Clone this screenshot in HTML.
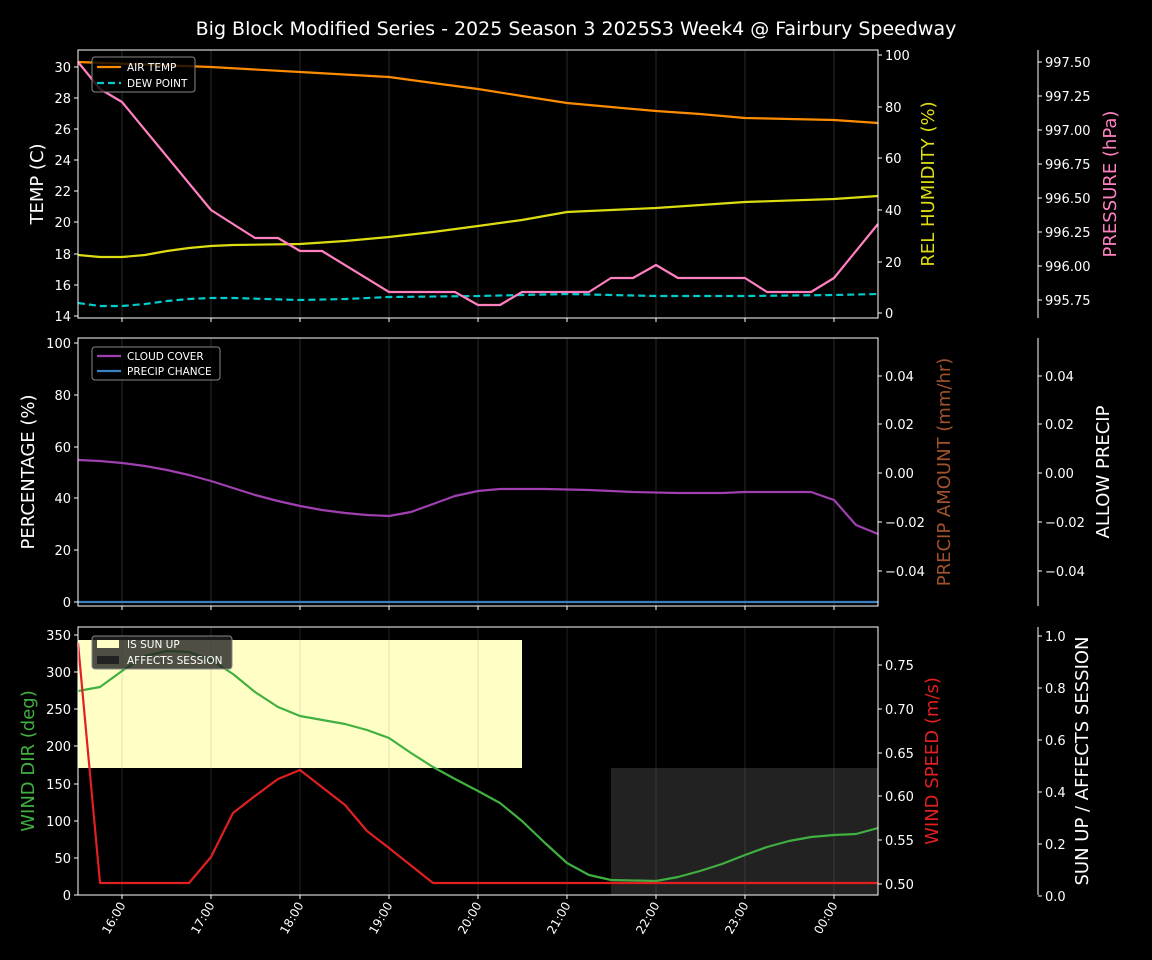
<!DOCTYPE html>
<html><head><meta charset="utf-8"><style>html,body{margin:0;padding:0;background:#000;}svg{display:block;font-family:"DejaVu Sans","Liberation Sans",sans-serif;}</style></head><body>
<svg width="1152" height="960" viewBox="0 0 1152 960" xmlns="http://www.w3.org/2000/svg">
<rect width="1152" height="960" fill="#000"/>
<text x="576" y="35" fill="#fff" font-size="19" text-anchor="middle">Big Block Modified Series - 2025 Season 3 2025S3 Week4 @ Fairbury Speedway</text>
<g stroke="#2a2a2a" stroke-width="1">
<path d="M122 50V318M211 50V318M300 50V318M389 50V318M478 50V318M567 50V318M656 50V318M745 50V318M834 50V318"/>
<path d="M122 338V606M211 338V606M300 338V606M389 338V606M478 338V606M567 338V606M656 338V606M745 338V606M834 338V606"/>
</g>
<rect x="78" y="640" width="444" height="128" fill="#ffffc5"/>
<rect x="611" y="768" width="267" height="127" fill="#222"/>
<g stroke="#888" stroke-width="1" opacity="0.25">
<path d="M122 627V895M211 627V895M300 627V895M389 627V895M478 627V895M567 627V895M656 627V895M745 627V895M834 627V895"/>
</g>
<g fill="none" stroke-width="2.2" stroke-linejoin="round">
<polyline stroke="#ff8c00" points="78,62 211,67 300,72 389,77 433,83 478,89 522,96 567,103 611,107 656,111 700,114 745,118 834,120 878,123"/>
<polyline stroke="#00cccc" stroke-dasharray="7,4" points="78,303 100,306 122,306 145,304 167,301 189,299 211,298 233,298 300,300 345,299 389,297 478,296 567,294 656,296 745,296 834,295 878,294"/>
<polyline stroke="#dddd11" points="78,255 100,257 122,257 145,255 167,251 189,248 211,246 233,245 300,244 345,241 389,237 433,232 478,226 522,220 567,212 611,210 656,208 745,202 834,199 878,196"/>
<polyline stroke="#ff80c0" points="78,62 100,89 122,102 211,210 255,238 278,238 300,251 322,251 389,292 455,292 478,305 500,305 522,292 589,292 611,278 633,278 656,265 678,278 745,278 767,292 811,292 834,278 878,224"/>
<polyline stroke="#a040b0" points="78,460 100,461 122,463 145,466 167,470 189,475 211,481 233,488 255,495 278,501 300,506 322,510 345,513 367,515 389,516 411,512 433,504 455,496 478,491 500,489 545,489 589,490 633,492 678,493 722,493 745,492 789,492 811,492 834,500 856,525 878,534"/>
<line stroke="#3a80c0" x1="78" y1="602" x2="878" y2="602"/>
<polyline stroke="#40b040" points="78,691 100,687 122,671 145,656 167,651 189,652 211,660 233,674 255,692 278,707 300,716 345,724 367,730 389,738 411,753 433,767 455,779 478,791 500,803 522,821 545,843 567,863 589,875 611,880 656,881 678,877 700,871 722,864 745,855 767,847 789,841 811,837 834,835 856,834 878,828"/>
<polyline stroke="#e02020" points="78,643 100,883 189,883 211,857 233,813 255,796 278,779 300,770 345,805 367,831 389,848 433,883 878,883"/>
</g>
<g fill="none" stroke="#fff" stroke-width="1">
<rect x="78" y="50" width="800" height="268"/>
<rect x="78" y="338" width="800" height="268"/>
<rect x="78" y="627" width="800" height="268"/>
<path d="M1038 50V318M1038 338V606M1038 627V895"/>
<path d="M122 318v4M211 318v4M300 318v4M389 318v4M478 318v4M567 318v4M656 318v4M745 318v4M834 318v4"/>
<path d="M122 606v4M211 606v4M300 606v4M389 606v4M478 606v4M567 606v4M656 606v4M745 606v4M834 606v4"/>
<path d="M122 895v4M211 895v4M300 895v4M389 895v4M478 895v4M567 895v4M656 895v4M745 895v4M834 895v4"/>
<path d="M78 67h-4M78 98h-4M78 129h-4M78 160h-4M78 191h-4M78 222h-4M78 254h-4M78 285h-4M78 316h-4"/>
<path d="M878 55h4M878 107h4M878 158h4M878 210h4M878 262h4M878 313h4"/>
<path d="M1038 62h4M1038 96h4M1038 130h4M1038 164h4M1038 198h4M1038 232h4M1038 266h4M1038 300h4"/>
<path d="M78 343h-4M78 395h-4M78 447h-4M78 498h-4M78 550h-4M78 602h-4"/>
<path d="M878 376h4M878 424h4M878 473h4M878 522h4M878 571h4"/>
<path d="M1038 376h4M1038 424h4M1038 473h4M1038 522h4M1038 571h4"/>
<path d="M78 635h-4M78 672h-4M78 709h-4M78 746h-4M78 784h-4M78 821h-4M78 858h-4M78 895h-4"/>
<path d="M878 665h4M878 709h4M878 753h4M878 796h4M878 840h4M878 884h4"/>
<path d="M1038 636h4M1038 688h4M1038 740h4M1038 792h4M1038 844h4M1038 896h4"/>
</g>
<g fill="#fff" font-size="13">
<g text-anchor="end">
<text x="71" y="72">30</text><text x="71" y="103">28</text><text x="71" y="134">26</text><text x="71" y="165">24</text><text x="71" y="196">22</text><text x="71" y="227">20</text><text x="71" y="259">18</text><text x="71" y="290">16</text><text x="71" y="321">14</text>
<text x="71" y="348">100</text><text x="71" y="400">80</text><text x="71" y="452">60</text><text x="71" y="503">40</text><text x="71" y="555">20</text><text x="71" y="607">0</text>
<text x="71" y="640">350</text><text x="71" y="677">300</text><text x="71" y="714">250</text><text x="71" y="751">200</text><text x="71" y="789">150</text><text x="71" y="826">100</text><text x="71" y="863">50</text><text x="71" y="900">0</text>
</g>
<text x="885" y="60">100</text><text x="885" y="112">80</text><text x="885" y="163">60</text><text x="885" y="215">40</text><text x="885" y="267">20</text><text x="885" y="318">0</text>
<text x="1045" y="67">997.50</text><text x="1045" y="101">997.25</text><text x="1045" y="135">997.00</text><text x="1045" y="169">996.75</text><text x="1045" y="203">996.50</text><text x="1045" y="237">996.25</text><text x="1045" y="271">996.00</text><text x="1045" y="305">995.75</text>
<text x="885" y="381">0.04</text><text x="885" y="429">0.02</text><text x="885" y="478">0.00</text><text x="885" y="527">−0.02</text><text x="885" y="576">−0.04</text>
<text x="1045" y="381">0.04</text><text x="1045" y="429">0.02</text><text x="1045" y="478">0.00</text><text x="1045" y="527">−0.02</text><text x="1045" y="576">−0.04</text>
<text x="885" y="670">0.75</text><text x="885" y="714">0.70</text><text x="885" y="758">0.65</text><text x="885" y="801">0.60</text><text x="885" y="845">0.55</text><text x="885" y="889">0.50</text>
<text x="1045" y="641">1.0</text><text x="1045" y="693">0.8</text><text x="1045" y="745">0.6</text><text x="1045" y="797">0.4</text><text x="1045" y="849">0.2</text><text x="1045" y="901">0.0</text>
<g font-size="12" text-anchor="end">
<text transform="translate(126,905) rotate(-60)">16:00</text>
<text transform="translate(215,905) rotate(-60)">17:00</text>
<text transform="translate(304,905) rotate(-60)">18:00</text>
<text transform="translate(393,905) rotate(-60)">19:00</text>
<text transform="translate(482,905) rotate(-60)">20:00</text>
<text transform="translate(571,905) rotate(-60)">21:00</text>
<text transform="translate(660,905) rotate(-60)">22:00</text>
<text transform="translate(749,905) rotate(-60)">23:00</text>
<text transform="translate(838,905) rotate(-60)">00:00</text>
</g>
</g>
<g font-size="18" text-anchor="middle">
<text transform="translate(43,184) rotate(-90)" fill="#fff">TEMP (C)</text>
<text transform="translate(34,472) rotate(-90)" fill="#fff">PERCENTAGE (%)</text>
<text transform="translate(34,761) rotate(-90)" fill="#40b040">WIND DIR (deg)</text>
<text transform="translate(934,184) rotate(-90)" fill="#dddd11">REL HUMIDITY (%)</text>
<text transform="translate(1116,184) rotate(-90)" fill="#ff80c0">PRESSURE (hPa)</text>
<text transform="translate(950,472) rotate(-90)" fill="#a0522d">PRECIP AMOUNT (mm/hr)</text>
<text transform="translate(1109,472) rotate(-90)" fill="#fff">ALLOW PRECIP</text>
<text transform="translate(938,761) rotate(-90)" fill="#e02020">WIND SPEED (m/s)</text>
<text transform="translate(1088,761) rotate(-90)" fill="#fff">SUN UP / AFFECTS SESSION</text>
</g>
<g font-size="10.5" fill="#fff">
<rect x="92" y="57" width="103" height="35" rx="3" fill="#000" fill-opacity="0.8" stroke="#888"/>
<line x1="97" y1="67" x2="121" y2="67" stroke="#ff8c00" stroke-width="2.2"/><text x="127" y="71">AIR TEMP</text>
<line x1="97" y1="83" x2="121" y2="83" stroke="#00cccc" stroke-width="2.2" stroke-dasharray="7,4"/><text x="127" y="87">DEW POINT</text>
<rect x="92" y="347" width="128" height="33" rx="3" fill="#000" fill-opacity="0.8" stroke="#888"/>
<line x1="97" y1="356" x2="121" y2="356" stroke="#a040b0" stroke-width="2.2"/><text x="127" y="360">CLOUD COVER</text>
<line x1="97" y1="371" x2="121" y2="371" stroke="#3a80c0" stroke-width="2.2"/><text x="127" y="375">PRECIP CHANCE</text>
<rect x="92" y="636" width="140" height="33" rx="3" fill="#222" fill-opacity="0.8" stroke="#888"/>
<rect x="97" y="640" width="22" height="8" fill="#ffffc5"/><text x="127" y="648">IS SUN UP</text>
<rect x="97" y="656" width="22" height="8" fill="#222"/><text x="127" y="664">AFFECTS SESSION</text>
</g>
</svg>
</body></html>
